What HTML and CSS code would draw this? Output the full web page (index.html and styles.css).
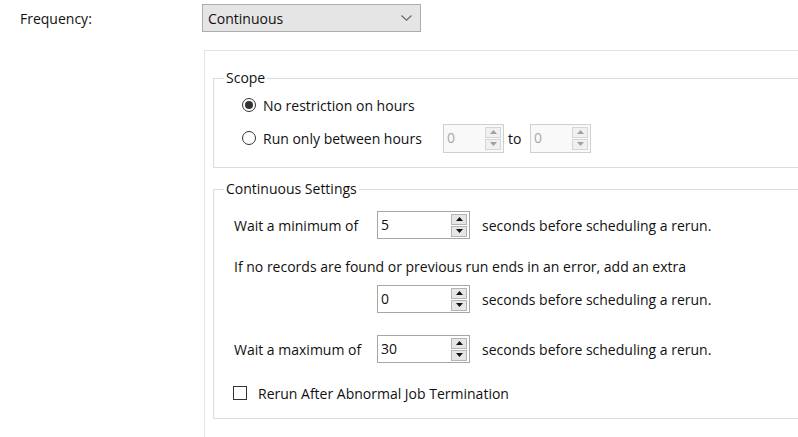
FILE: index.html
```html
<!DOCTYPE html>
<html>
<head>
<meta charset="utf-8">
<title>Frequency</title>
<link rel="stylesheet" href="styles.css">
</head>
<body>
<div class="page">
  <div class="freq-row">
    <span class="freq-label">Frequency:</span>
    <div class="combo">
      <span>Continuous</span>
      <svg class="chev" width="11" height="6" viewBox="0 0 11 6"><path d="M0.5 0.5 L5.5 5.2 L10.5 0.5" fill="none" stroke="#666" stroke-width="1.1"/></svg>
    </div>
  </div>

  <div class="panel">
    <fieldset class="group scope">
      <legend>Scope</legend>
      <div class="radio-row r1">
        <span class="radio checked"></span>
        <span>No restriction on hours</span>
      </div>
      <div class="radio-row r2">
        <span class="radio"></span>
        <span class="run-label">Run only between hours</span>
        <div class="spin small disabled">
          <span class="val">0</span>
          <div class="btns">
            <span class="btn"><svg width="7" height="4" viewBox="0 0 7 4"><path d="M0 4 L3.5 0 L7 4Z"/></svg></span>
            <span class="btn"><svg width="7" height="4" viewBox="0 0 7 4"><path d="M0 0 L3.5 4 L7 0Z"/></svg></span>
          </div>
        </div>
        <span class="to">to</span>
        <div class="spin small disabled">
          <span class="val">0</span>
          <div class="btns">
            <span class="btn"><svg width="7" height="4" viewBox="0 0 7 4"><path d="M0 4 L3.5 0 L7 4Z"/></svg></span>
            <span class="btn"><svg width="7" height="4" viewBox="0 0 7 4"><path d="M0 0 L3.5 4 L7 0Z"/></svg></span>
          </div>
        </div>
      </div>
    </fieldset>

    <fieldset class="group cont">
      <legend>Continuous Settings</legend>
      <div class="set-row ra">
        <span class="set-label">Wait a minimum of</span>
        <div class="spin">
          <span class="val">5</span>
          <div class="btns">
            <span class="btn"><svg width="7" height="4" viewBox="0 0 7 4"><path d="M0 4 L3.5 0 L7 4Z"/></svg></span>
            <span class="btn"><svg width="7" height="4" viewBox="0 0 7 4"><path d="M0 0 L3.5 4 L7 0Z"/></svg></span>
          </div>
        </div>
        <span class="secs">seconds before scheduling a rerun.</span>
      </div>
      <div class="note">If no records are found or previous run ends in an error, add an extra</div>
      <div class="set-row rb">
        <span class="set-label"></span>
        <div class="spin">
          <span class="val">0</span>
          <div class="btns">
            <span class="btn"><svg width="7" height="4" viewBox="0 0 7 4"><path d="M0 4 L3.5 0 L7 4Z"/></svg></span>
            <span class="btn"><svg width="7" height="4" viewBox="0 0 7 4"><path d="M0 0 L3.5 4 L7 0Z"/></svg></span>
          </div>
        </div>
        <span class="secs">seconds before scheduling a rerun.</span>
      </div>
      <div class="set-row rc">
        <span class="set-label">Wait a maximum of</span>
        <div class="spin">
          <span class="val">30</span>
          <div class="btns">
            <span class="btn"><svg width="7" height="4" viewBox="0 0 7 4"><path d="M0 4 L3.5 0 L7 4Z"/></svg></span>
            <span class="btn"><svg width="7" height="4" viewBox="0 0 7 4"><path d="M0 0 L3.5 4 L7 0Z"/></svg></span>
          </div>
        </div>
        <span class="secs">seconds before scheduling a rerun.</span>
      </div>
      <div class="check-row">
        <span class="checkbox"></span>
        <span>Rerun After Abnormal Job Termination</span>
      </div>
    </fieldset>
  </div>
</div>
</body>
</html>
```

FILE: styles.css
```css
* { box-sizing: border-box; }

html, body {
  margin: 0;
  padding: 0;
  background: #fff;
}

body {
  font-family: "Open Sans", "Noto Sans", sans-serif;
  font-size: 14px;
  color: #111;
  overflow: hidden;
}

.page {
  width: 798px;
  height: 437px;
  overflow: hidden;
}

.freq-row {
  display: flex;
  align-items: center;
  padding-top: 4px;
}

.freq-label {
  width: 202px;
  padding-left: 20px;
}

.combo {
  width: 219px;
  height: 28px;
  background: #e5e5e5;
  border: 1px solid #adadad;
  display: flex;
  align-items: center;
  justify-content: space-between;
  padding: 0 8px 0 5px;
}

.chev { display: block; }

.panel {
  margin: 18px 0 0 204px;
  width: 640px;
  height: 420px;
  border: 1px solid #e3e3e3;
  padding: 17px 0 0 8px;
}

.group {
  margin: 0;
  border: 1px solid #dcdcdc;
  padding: 0 0 14px 10px;
  min-width: 0;
}

.group legend {
  padding: 0 2px;
  line-height: 20px;
}

.cont {
  margin-top: 11px;
  padding-bottom: 15px;
}

.radio-row {
  display: flex;
  align-items: center;
  margin-left: 18px;
}

.r1 { margin-top: 5px; height: 24px; }
.r2 { margin-top: 6px; height: 30px; }

.radio {
  width: 14px;
  height: 14px;
  border: 1px solid #333;
  border-radius: 50%;
  margin-right: 7px;
  display: flex;
  align-items: center;
  justify-content: center;
  flex: none;
}

.radio.checked::after {
  content: "";
  width: 8px;
  height: 8px;
  border-radius: 50%;
  background: #333;
}

.run-label { width: 180px; }

.to {
  width: 26px;
  padding-left: 4px;
}

.spin {
  width: 93px;
  height: 28px;
  border: 1px solid #a6a6a6;
  background: #fff;
  display: flex;
  justify-content: space-between;
  align-items: center;
  padding: 1px 2px 1px 3px;
  flex: none;
}

.spin .val { line-height: 20px; }

.btns {
  display: flex;
  flex-direction: column;
  gap: 1px;
}

.btn {
  width: 16px;
  height: 11px;
  background: #e6e6e6;
  border: 1px solid #b4b4b4;
  display: flex;
  align-items: center;
  justify-content: center;
}

.btn svg { display: block; fill: #111; }

.spin.small {
  width: 61px;
  height: 29px;
}

.spin.disabled {
  background: #f9f9f9;
  border-color: #cfcfcf;
  color: #a8a8a8;
}

.spin.disabled .btn {
  background: #f0f0f0;
  border-color: #d6d6d6;
}

.spin.disabled .btn svg { fill: #a0a0a0; }

.set-row {
  display: flex;
  align-items: center;
  margin-left: 10px;
  height: 28px;
}

.ra { margin-top: 12px; }
.rb { margin-top: 8px; }
.rc { margin-top: 22px; }

.set-label { width: 143px; flex: none; }

.secs { margin-left: 12px; }

.note {
  margin: 18px 0 0 10px;
  line-height: 20px;
}

.check-row {
  display: flex;
  align-items: center;
  margin: 20px 0 0 9px;
  height: 20px;
}

.checkbox {
  width: 14px;
  height: 14px;
  border: 1px solid #333;
  margin-right: 11px;
  flex: none;
}
```
